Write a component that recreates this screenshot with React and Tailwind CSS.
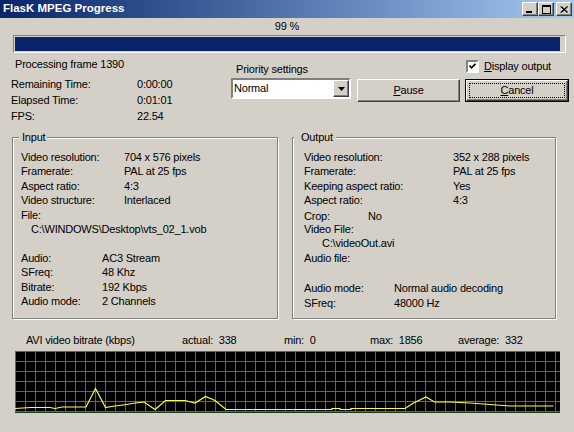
import React from "react";

const FONT = "font-['Liberation_Sans',Arial,sans-serif]";

// raised 3D bevel used by buttons
const RAISED =
  "border border-t-white border-l-white border-r-[#404040] border-b-[#404040] shadow-[inset_-1px_-1px_0_#808080] bg-[#d4d0c8]";
const SUNKEN =
  "border-2 border-t-[#808080] border-l-[#808080] border-r-white border-b-white";

function TitleButton({ children }) {
  return (
    <div className={`w-[16px] h-[14px] flex items-center justify-center ${RAISED}`}>
      {children}
    </div>
  );
}

function TitleBar() {
  return (
    <div className="h-[18px] flex items-center bg-linear-to-r from-[#0a246a] to-[#a6caf0] pl-[3px] pr-[2px]">
      <span className="text-white font-bold text-[11.5px] tracking-normal">FlasK MPEG Progress</span>
      <div className="ml-auto flex">
        <TitleButton>
          <svg width="8" height="7" viewBox="0 0 8 7">
            <rect x="0" y="5" width="6" height="2" fill="#000" />
          </svg>
        </TitleButton>
        <TitleButton>
          <svg width="9" height="9" viewBox="0 0 9 9">
            <rect x="0.5" y="0.5" width="8" height="8" fill="none" stroke="#000" />
            <rect x="0" y="0" width="9" height="2" fill="#000" />
          </svg>
        </TitleButton>
        <div className="w-[2px]" />
        <TitleButton>
          <svg width="8" height="7" viewBox="0 0 8 7">
            <path d="M0.5 0.5 L7 6.5 M1.5 0.5 L8 6.5 M7 0.5 L0.5 6.5 M8 0.5 L1.5 6.5" stroke="#000" strokeWidth="1" />
          </svg>
        </TitleButton>
      </div>
    </div>
  );
}

function InfoRow({ label, value, w }) {
  return (
    <div className="flex leading-[16px] pl-[11px]">
      <span style={{ width: w }} className="shrink-0">{label}</span>
      <span>{value}</span>
    </div>
  );
}

function Combo() {
  return (
    <div className={`h-[21px] mt-[1px] bg-white flex ${SUNKEN}`}>
      <div className="flex-1 pl-[1px] leading-[17px]">Normal</div>
      <div className={`w-[16px] h-full flex items-center justify-center ${RAISED}`}>
        <svg width="7" height="4" viewBox="0 0 7 4">
          <polygon points="0,0 7,0 3.5,4" fill="#000" />
        </svg>
      </div>
    </div>
  );
}

function Row({ label, value, w, indent }) {
  return (
    <div className="flex leading-[14.4px] h-[14.4px]" style={indent ? { paddingLeft: indent } : undefined}>
      {w ? <span style={{ width: w }} className="shrink-0">{label}</span> : <span>{label}</span>}
      {value && <span>{value}</span>}
    </div>
  );
}

function GroupBox({ title, className, legendClass, children }) {
  return (
    <fieldset
      className={`h-[189px] border border-[#808080] shadow-[inset_1px_1px_0_#fff,1px_1px_0_#fff] pt-[6px] ${className}`}
    >
      <legend className={`bg-[#d4d0c8] leading-[14px] ${legendClass}`}>{title}</legend>
      {children}
    </fieldset>
  );
}

const POINTS = [
  [0, 57], [16, 56], [35, 56], [40, 57], [47, 55.5], [71, 55.5], [80.5, 37], [90.5, 56],
  [96.5, 55], [111.5, 53], [120, 51.5], [129, 50.5], [140, 58], [150.5, 49], [170, 49],
  [180, 51.5], [190.5, 45], [200, 49], [211, 58], [317, 58], [317, 57], [325, 57], [325, 58],
  [336, 58], [336, 57], [390, 57], [398.5, 51.5], [411, 45.5], [419.5, 50.5], [435, 50.5],
  [455, 51.5], [475, 53], [495, 54.5], [538.5, 54.5],
];

function BitrateGraph() {
  const cols = Array.from({ length: 55 }, (_, i) => i * 10 + 0.5);
  const rows = Array.from({ length: 7 }, (_, i) => i * 10 + 0.5);
  return (
    <svg width="545" height="62" viewBox="0 0 545 62" className="block" shapeRendering="crispEdges">
      <rect width="545" height="62" fill="#000" />
      {cols.map((x) => (
        <line key={"c" + x} x1={x} y1="0" x2={x} y2="61" stroke="#00a800" strokeWidth="1" />
      ))}
      {rows.map((y) => (
        <line key={"r" + y} x1="0" y1={y} x2="545" y2={y} stroke="#00a800" strokeWidth="1" />
      ))}
      <line x1="0" y1="61.5" x2="545" y2="61.5" stroke="#1a3a1a" />
      <polyline
        points={POINTS.map((p) => `${p[0]},${p[1] + 0.5}`).join(" ")}
        fill="none"
        stroke="#ffff40"
        strokeWidth="1.2"
        shapeRendering="auto"
      />
    </svg>
  );
}

export default function App() {
  return (
    <div className={`w-[574px] h-[432px] overflow-hidden bg-[#d4d0c8] text-black text-[11px] tracking-[-0.2px] ${FONT}`}>
      <TitleBar />

      {/* percentage + progress bar */}
      <div className="h-[16px] leading-[16px] text-center">99 %</div>
      <div className="mt-[1px] ml-[13px] w-[553px] h-[18px] border border-t-[#808080] border-l-[#808080] border-r-white border-b-white p-[1px]">
        <div className="h-full w-[545px] bg-[#0a246a]" />
      </div>

      {/* stats, priority, buttons */}
      <div className="h-[77px] flex">
        <div className="w-[231px]">
          <div className="pl-[15px] mt-[3px] leading-[16px]">Processing frame 1390</div>
          <div className="mt-[4px]">
            <InfoRow label="Remaining Time:" value="0:00:00" w={126} />
            <InfoRow label="Elapsed Time:" value="0:01:01" w={126} />
            <InfoRow label="FPS:" value="22.54" w={126} />
          </div>
        </div>
        <div className="w-[120px]">
          <div className="pl-[5px] mt-[8px] leading-[16px]">Priority settings</div>
          <Combo />
        </div>
        <div className="ml-[6px]">
          <div className="mt-[5px] h-[16px] pl-[109px] flex items-center gap-[5px]">
            <div className={`w-[13px] h-[13px] bg-white flex items-center justify-center ${SUNKEN}`}>
              <svg width="7" height="7" viewBox="0 0 7 7">
                <polyline points="0.5,2.5 2.5,4.8 6.5,0.8" fill="none" stroke="#000" strokeWidth="1.8" />
              </svg>
            </div>
            <span className="leading-[16px]">
              <u>D</u>isplay output
            </span>
          </div>
          <div className="mt-[5px] flex gap-[5px]">
            <div className={`w-[103px] h-[23px] flex items-center justify-center ${RAISED}`}>
              <span><u>P</u>ause</span>
            </div>
            <div className="w-[104px] h-[23px] border border-black">
              <div className={`h-full p-[2px] ${RAISED}`}>
                <div className="h-full border border-dotted border-black flex items-center justify-center">
                  <span><u>C</u>ancel</span>
                </div>
              </div>
            </div>
          </div>
        </div>
      </div>

      {/* input / output groups */}
      <div className="flex pl-[12px]">
        <GroupBox title="Input" className="w-[266px] px-[8px]" legendClass="ml-[-2px] pl-[3px] pr-[2px]">
          <Row label="Video resolution:" value="704 x 576 pixels" w={103} />
          <Row label="Framerate:" value="PAL at 25 fps" w={103} />
          <Row label="Aspect ratio:" value="4:3" w={103} />
          <Row label="Video structure:" value="Interlaced" w={103} />
          <Row label="File:" />
          <Row label="C:\WINDOWS\Desktop\vts_02_1.vob" indent={10} />
          <div className="h-[14.4px]" />
          <Row label="Audio:" value="AC3 Stream" w={81} />
          <Row label="SFreq:" value="48 Khz" w={81} />
          <Row label="Bitrate:" value="192 Kbps" w={81} />
          <Row label="Audio mode:" value="2 Channels" w={81} />
        </GroupBox>
        <GroupBox title="Output" className="ml-[14px] w-[264px] px-[11px]" legendClass="ml-[-10px] pl-[7px] pr-[3px]">
          <Row label="Video resolution:" value="352 x 288 pixels" w={149} />
          <Row label="Framerate:" value="PAL at 25 fps" w={149} />
          <Row label="Keeping aspect ratio:" value="Yes" w={149} />
          <Row label="Aspect ratio:" value="4:3" w={149} />
          <div className="mt-[1.5px]">
            <Row label="Crop:" value="No" w={64} />
          </div>
          <div className="mt-[-1.5px]">
            <Row label="Video File:" />
            <Row label="C:\videoOut.avi" indent={18} />
            <Row label="Audio file:" />
          </div>
          <div className="h-[16px]" />
          <Row label="Audio mode:" value="Normal audio decoding" w={90} />
          <Row label="SFreq:" value="48000 Hz" w={90} />
        </GroupBox>
      </div>

      {/* bitrate graph */}
      <div className="mt-[14px] flex leading-[14px] pl-[26px]">
        <span className="w-[156px]">AVI video bitrate (kbps)</span>
        <span className="w-[102px]">actual:&nbsp; 338</span>
        <span className="w-[86px]">min:&nbsp; 0</span>
        <span className="w-[88px]">max:&nbsp; 1856</span>
        <span>average:&nbsp; 332</span>
      </div>
      <div className="mt-[4px] ml-[15px]">
        <BitrateGraph />
      </div>
    </div>
  );
}
